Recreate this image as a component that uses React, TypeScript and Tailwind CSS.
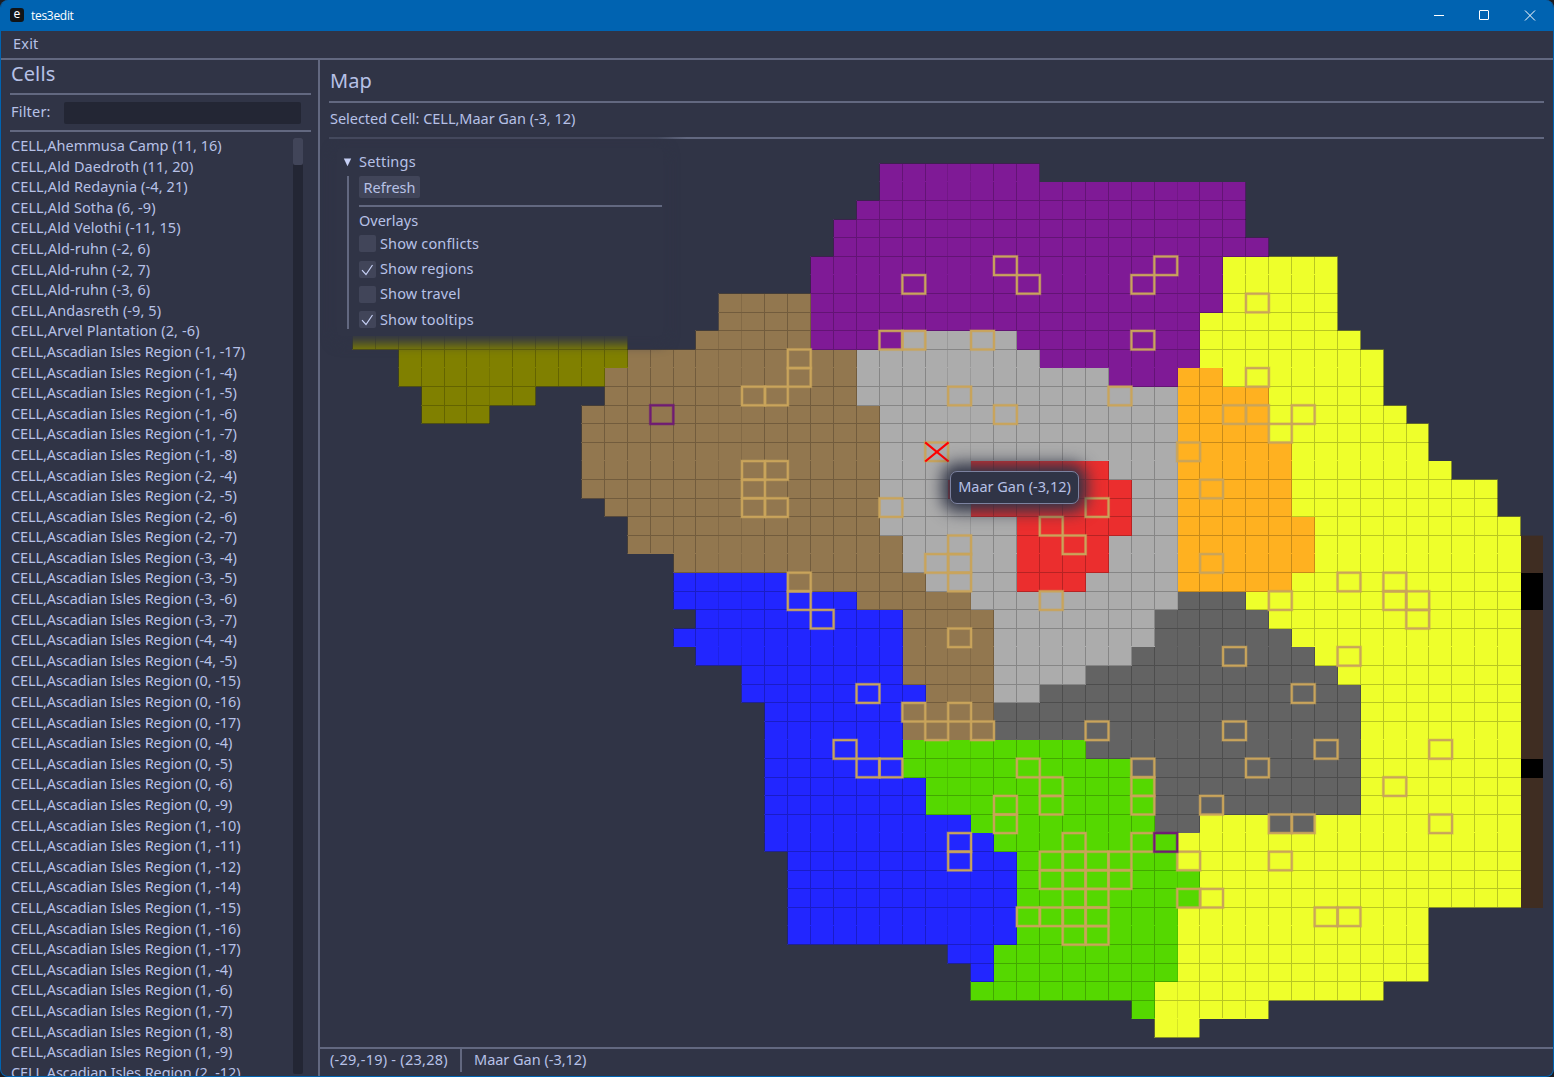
import React from "react";

const COLORS: Record<string, string> = {
  P: "#7f1a96",
  T: "#92774f",
  Y: "#eeff2b",
  G: "#acacac",
  R: "#eb2e2e",
  O: "#ffb120",
  D: "#636363",
  B: "#2226ff",
  L: "#55d800",
  V: "#808000",
  N: "#3f2d22",
  K: "#000000",
};

// Region runs per map row: start column, then region key and end column.
const ROWS: Record<number, string> = {
  1: "24 P31",
  2: "24 P40",
  3: "23 P40",
  4: "22 P40",
  5: "22 P41",
  6: "21 P39 Y44",
  7: "21 P39 Y44",
  8: "17 T21 P39 Y44",
  9: "17 T21 P38 Y44",
  10: "1 V13 .16 T21 P25 G30 P38 Y45",
  11: "3 V13 T23 G31 P38 Y46",
  12: "3 V12 T23 G34 P37 O39 Y46",
  13: "4 V9 .12 T23 G37 O41 Y46",
  14: "4 V7 .11 T24 G37 O41 Y47",
  15: "11 T24 G37 O41 Y48",
  16: "11 T24 G37 O42 Y48",
  17: "11 T24 G28 R34 G37 O42 Y49",
  18: "11 T24 G27 R35 G37 O42 Y51",
  19: "12 T24 G28 R35 G37 O42 Y51",
  20: "13 T24 G30 R35 G37 O43 Y52",
  21: "13 T25 G30 R34 G37 O43 Y52 N53",
  22: "15 T25 G30 R34 G37 O43 Y52 N53",
  23: "15 B20 T26 G30 R33 G37 O42 Y52 K53",
  24: "15 B23 T28 G37 D40 Y52 K53",
  25: "16 B25 T29 G36 D41 Y52 N53",
  26: "15 B25 T29 G36 D42 Y52 N53",
  27: "16 B25 T29 G35 D43 Y52 N53",
  28: "18 B25 T29 G33 D44 Y52 N53",
  29: "18 B26 T29 G31 D45 Y52 N53",
  30: "19 B25 T29 D45 Y52 N53",
  31: "19 B25 T29 D45 Y52 N53",
  32: "19 B25 L33 D45 Y52 N53",
  33: "19 B25 L35 D45 Y52 K53",
  34: "19 B26 L36 D45 Y52 N53",
  35: "19 B26 L36 D45 Y52 N53",
  36: "19 B28 L36 D38 Y41 D43 Y52 N53",
  37: "19 B29 L37 Y52 N53",
  38: "20 B30 L37 Y52 N53",
  39: "20 B30 L38 Y52 N53",
  40: "20 B30 L38 Y52 N53",
  41: "20 B30 L37 Y48",
  42: "20 B30 L37 Y48",
  43: "27 B29 L37 Y48",
  44: "28 B29 L37 Y48",
  45: "28 L36 Y46",
  46: "35 L36 Y41",
  47: "36 Y38",
};

const MARKED =
  "25,7 29,6 30,7 35,7 36,6 24,10 25,10 28,10 35,10 40,8 40,12 39,14 40,14 42,14 41,15 37,16 38,18 38,22 41,24 44,23 46,23 46,24 47,24 47,25 44,27 39,27 42,29 39,31 43,32 40,33 46,34 38,35 48,32 48,36 41,36 42,36 41,38 37,38 37,40 38,40 43,41 44,41 20,11 20,12 18,13 19,13 18,17 19,17 18,18 18,19 19,19 27,13 29,14 34,13 26,16 24,19 27,21 26,22 27,22 27,23 31,24 33,19 31,20 32,21 20,23 20,24 21,25 27,26 23,29 25,30 27,30 26,31 28,31 22,32 23,33 24,33 33,31 30,33 31,34 31,35 29,35 29,36 35,33 35,34 35,35 32,37 35,37 31,38 32,38 33,38 34,38 31,39 32,39 33,39 34,39 32,40 33,40 30,41 31,41 32,41 33,41 32,42 33,42 27,37 27,38"
    .split(" ")
    .map((p) => p.split(",").map(Number));

const SPECIAL = [
  [14, 14],
  [36, 37],
];

const CELL_W = 22.906;
const CELL_H = 18.6;
const fx = (c: number) => 9.6 + CELL_W * c;
const fy = (r: number) => 5.8 + CELL_H * r;
// First fully covered pixel of a column or row; the pixel before it carries the grid line.
const px = (c: number) => (c === 53 ? 1223 : Math.ceil(fx(c) - 0.12));
const py = (r: number) => Math.ceil(fy(r) - 0.05);

type Run = { r: number; a: number; b: number; k: string };
const RUNS: Run[] = Object.entries(ROWS).flatMap(([row, spec]) => {
  const parts = spec.split(" ");
  let at = Number(parts[0]);
  const out: Run[] = [];
  for (const p of parts.slice(1)) {
    const end = Number(p.slice(1));
    if (p[0] !== ".") out.push({ r: Number(row), a: at, b: end, k: p[0] });
    at = end;
  }
  return out;
});
const FAINT = [7, 17, 18, 27, 28, 37];
const FILLED = new Set(RUNS.flatMap((u) => Array.from({ length: u.b - u.a }, (_, j) => `${u.a + j},${u.r}`)));
const filled = (c: number, r: number) => FILLED.has(`${c},${r}`);

function Outline({ c, r }: { c: number; r: number }) {
  return (
    <g>
      <rect x={fx(c) + 0.1} y={fy(r) + 0.1} width={CELL_W} height={CELL_H} strokeWidth={3.2} opacity={0.4} />
      <rect x={fx(c) + 0.1} y={fy(r) + 0.1} width={CELL_W} height={CELL_H} strokeWidth={1.9} />
    </g>
  );
}

function MapCanvas() {
  return (
    <svg className="block" width="1233" height="908" viewBox="0 0 1233 908">
      <g shapeRendering="crispEdges">
        {RUNS.map((u, i) => {
          const top = u.r % 5 === 2 ? 0 : 1;
          return <rect key={i} x={px(u.a) - 1} y={py(u.r) - top} width={px(u.b) - px(u.a) + 1} height={py(u.r + 1) - py(u.r) + top} fill={COLORS[u.k]} opacity={0.4} />;
        })}
        {RUNS.map((u, i) => (
          <rect key={i} x={px(u.a)} y={py(u.r)} width={px(u.b) - px(u.a)} height={py(u.r + 1) - py(u.r)} fill={COLORS[u.k]} />
        ))}
        {RUNS.filter((u) => u.k !== "N" && u.k !== "K").map((u, i) => (
          <g key={i} fill="#000000">
            {u.r % 5 !== 2 && <rect x={px(u.a)} y={py(u.r) - 1} width={px(u.b) - px(u.a)} height={1} opacity={0.22} />}
            {Array.from({ length: u.b - u.a }, (_, j) => u.a + j).map((c) => (
              <rect key={c} x={px(c) - 1} y={py(u.r)} width={1} height={py(u.r + 1) - py(u.r) - 1} opacity={FAINT.includes(c) ? 0.1 : 0.22} />
            ))}
            {!filled(u.b, u.r) && <rect x={px(u.b) - 1} y={py(u.r)} width={1} height={py(u.r + 1) - py(u.r)} fill="#1c1e2c" opacity={0.5} />}
            {(u.r + 1) % 5 !== 2 &&
              Array.from({ length: u.b - u.a }, (_, j) => u.a + j)
                .filter((c) => !filled(c, u.r + 1))
                .map((c) => <rect key={`b${c}`} x={px(c)} y={py(u.r + 1) - 1} width={px(c + 1) - px(c)} height={1} fill="#1c1e2c" opacity={0.5} />)}
          </g>
        ))}
      </g>
      <g fill="none" stroke="#c9a45b">
        {MARKED.map(([c, r], i) => (
          <Outline key={i} c={c} r={r} />
        ))}
      </g>
      <g fill="none" stroke="#6f1a74">
        {SPECIAL.map(([c, r], i) => (
          <Outline key={i} c={c} r={r} />
        ))}
      </g>
      <path d={`M${fx(26)} ${fy(16)}L${fx(27) + 0.5} ${fy(17) + 0.5}M${fx(27) + 0.5} ${fy(16)}L${fx(26)} ${fy(17) + 0.5}`} stroke="#ff0000" strokeWidth={2.1} />
    </svg>
  );
}

const NAMED = [
  "Ahemmusa Camp (11, 16)",
  "Ald Daedroth (11, 20)",
  "Ald Redaynia (-4, 21)",
  "Ald Sotha (6, -9)",
  "Ald Velothi (-11, 15)",
  "Ald-ruhn (-2, 6)",
  "Ald-ruhn (-2, 7)",
  "Ald-ruhn (-3, 6)",
  "Andasreth (-9, 5)",
  "Arvel Plantation (2, -6)",
];
const ASCADIAN = ["-1, -17", "-1, -4", "-1, -5", "-1, -6", "-1, -7", "-1, -8", "-2, -4", "-2, -5", "-2, -6", "-2, -7", "-3, -4", "-3, -5", "-3, -6", "-3, -7", "-4, -4", "-4, -5", "0, -15", "0, -16", "0, -17", "0, -4", "0, -5", "0, -6", "0, -9", "1, -10", "1, -11", "1, -12", "1, -14", "1, -15", "1, -16", "1, -17", "1, -4", "1, -6", "1, -7", "1, -8", "1, -9", "2, -12"];

function Check({ label, on }: { label: string; on?: boolean }) {
  return (
    <div className="flex h-[25.4px] items-center gap-[4px]">
      <span className="mt-[2px] flex h-[17px] w-[17px] items-center justify-center rounded-[2px] bg-[#414559]">
        {on && (
          <svg width="17" height="17" viewBox="0 0 17 17" fill="none" stroke="#c6d0f5" strokeWidth="1.2">
            <path d="M3 9.2L7 13.5L13.5 4" />
          </svg>
        )}
      </span>
      <span className="tracking-[0.15px]">{label}</span>
    </div>
  );
}

export default function App() {
  return (
    <div className="h-[1077px] w-[1554px] bg-[#1d1d22]">
      <div className="flex h-[1077px] w-[1554px] flex-col overflow-hidden rounded-[8px] border-r border-b border-l border-[#0063b1] bg-[#303446] font-['Noto_Sans',sans-serif] text-[14.5px] leading-[20px] tracking-[0px] whitespace-nowrap text-[#b7c1e6]">
        <header className="flex h-[31px] shrink-0 items-center bg-[#0063b1] text-white">
          <span className="-mt-px ml-[9px] flex h-[14px] w-[14px] items-center justify-center rounded-[3px] bg-[#111417] pb-[2px] text-[12px] leading-none">e</span>
          <span className="ml-[7px] font-['Open_Sans',sans-serif] text-[12px] tracking-[-0.3px]">tes3edit</span>
          <svg className="-mt-px mr-[16px] ml-auto" width="104" height="12" viewBox="0 0 104 12" fill="none" stroke="#ffffff">
            <path d="M1 6.5H11" />
            <rect x="46.5" y="1.5" width="9" height="9" rx="0.5" />
            <path d="M92 1.5L102 11.5M102 1.5L92 11.5" />
          </svg>
        </header>
        <nav className="h-[27px] shrink-0 pl-[12px] leading-[24px] tracking-[0.2px]">Exit</nav>
        <div className="flex min-h-0 flex-1 border-t-2 border-[#626880]">
          <aside className="flex w-[317px] shrink-0 flex-col overflow-hidden px-[9px]">
            <h1 className="h-[33px] pl-[1px] text-[20px] leading-[27px] tracking-[0.1px]">Cells</h1>
            <div className="flex h-[39px] w-[301px] shrink-0 items-center border-y-2 border-[#626880]">
              <span className="w-[54px] pb-[4px] pl-[1px] tracking-[0.2px]">Filter:</span>
              <span className="h-[22px] w-[237px] rounded-[2px] bg-[#232634]" />
            </div>
            <div className="flex min-h-0 flex-1 pt-[5px]">
              <ul className="-mt-[2px] w-[283px] overflow-hidden pl-[1px]">
                {NAMED.map((c, i) => (
                  <li key={i} className={i === 0 ? "h-[20.6px] tracking-[0px]" : "h-[20.6px] tracking-[0.1px]"}>CELL,{c}</li>
                ))}
                {ASCADIAN.map((c, i) => (
                  <li key={i} className="h-[20.6px] tracking-[-0.1px]">CELL,Ascadian Isles Region ({c})</li>
                ))}
              </ul>
              <div className="mt-px mb-[2px] w-[10px] rounded-[2px] bg-[#232634]">
                <div className="h-[27px] rounded-[2px] bg-[#414559]" />
              </div>
            </div>
          </aside>
          <main className="flex min-w-0 flex-1 flex-col border-l-2 border-[#626880]">
            <div className="mx-[9px] h-[43px] shrink-0 border-b-2 border-[#626880] pl-[1px] text-[20px] leading-[41px] tracking-[0.1px]">Map</div>
            <div className="mx-[9px] h-[34px] shrink-0 pl-[1px] leading-[30px] tracking-[-0.03px]">Selected Cell: CELL,Maar Gan (-3, 12)</div>
            <div className="mx-[9px] h-[2px] shrink-0 bg-[linear-gradient(to_right,#454a5e_0,#454a5e_328px,#626880_358px)]" />
            <div className="relative h-[908px] shrink-0">
              <MapCanvas />
              <section className="absolute top-[9px] left-[17px] h-[188px] w-[326px] rounded-[4px] bg-[#303446] shadow-[0_4px_12px_4px_#303446]">
                <div className="flex h-[28px] items-center">
                  <svg className="ml-[6px]" width="9" height="9" viewBox="0 0 9 9" fill="#c6d0f5">
                    <path d="M0.8 0.5H8.2L4.5 8.2Z" />
                  </svg>
                  <span className="ml-[7px] pb-[3px] tracking-[0.2px]">Settings</span>
                </div>
                <div className="ml-[10px] h-[153px] w-[315px] border-l-2 border-[#626880] pl-[10px]">
                  <div className="h-[22px] w-[61px] rounded-[2px] bg-[#414559] text-center leading-[22px]">Refresh</div>
                  <div className="mt-[7px] h-[2px] w-[303px] bg-[#626880]" />
                  <div className="h-[23px] leading-[26px]">Overlays</div>
                  <Check label="Show conflicts" />
                  <Check label="Show regions" on />
                  <Check label="Show travel" />
                  <Check label="Show tooltips" on />
                </div>
              </section>
              <div className="absolute top-[332px] left-[630px] flex h-[33px] w-[129px] items-center justify-center rounded-[7px] border border-[#7c82a0] bg-[#303446] pb-[3px] shadow-[0_0_16px_8px_#303446]">Maar Gan (-3,12)</div>
            </div>
            <footer className="flex min-h-0 flex-1 border-t-2 border-[#626880] pl-[10px] leading-[21px]">
              <span className="w-[130px] tracking-[0.25px]">(-29,-19) - (23,28)</span>
              <span className="h-[23px] w-[2px] bg-[#626880]" />
              <span className="ml-[12px] tracking-[-0.02px]">Maar Gan (-3,12)</span>
            </footer>
          </main>
        </div>
      </div>
    </div>
  );
}
